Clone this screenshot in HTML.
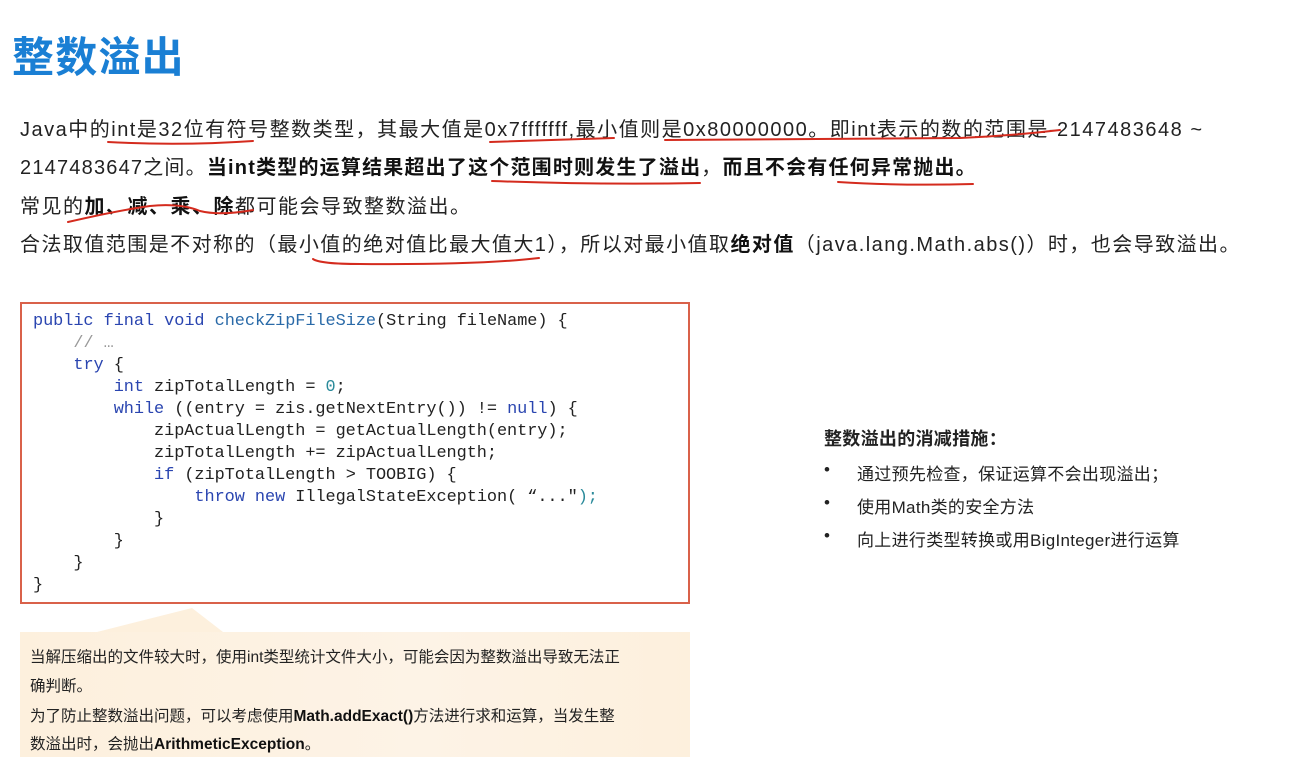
<!DOCTYPE html>
<html><head><meta charset="utf-8"><style>
body{margin:0;width:1294px;height:772px;background:#fff;position:relative;overflow:hidden;font-family:"Liberation Sans","Noto Sans CJK SC",sans-serif;color:#222}
.a{position:absolute;white-space:nowrap}
.t{left:12px;top:24px;font-size:42px;font-weight:bold;color:#1a7fd4;letter-spacing:1.2px}
.p{left:20px;font-size:20px;line-height:24px;letter-spacing:1.5px}
b{font-weight:bold;color:#111}
.code{left:20px;top:302px;width:670px;height:302px;border:2px solid #d9614a;box-sizing:border-box}
pre{margin:0;position:absolute;left:11px;top:7px;font-family:"Liberation Mono",monospace;font-size:16.9px;line-height:22px;color:#222;letter-spacing:-0.05px}
.k{color:#2a45b0}.m{color:#2a6aa8}.c{color:#999}.n{color:#2a8a9a}
.call{left:20px;top:632px;width:670px;height:125px;background:linear-gradient(90deg,#fdf0dd,#fdf3e6 60%,#fdf0dd)}
.call div{position:absolute;left:10px;font-size:15.5px;color:#222;white-space:nowrap}
.r{left:824px;font-size:17px;letter-spacing:0.3px}
.r span{position:absolute;left:33px}
</style></head><body>
<div class="a t">整数溢出</div>
<div class="a p" style="top:118px">Java中的int是32位有符号整数类型，其最大值是0x7fffffff,最小值则是0x80000000。即int表示的数的范围是-2147483648 ~</div>
<div class="a p" style="top:156px;letter-spacing:1.2px">2147483647之间。<b>当int类型的运算结果超出了这个范围时则发生了溢出</b>，<b>而且不会有任何异常抛出。</b></div>
<div class="a p" style="top:195px">常见的<b>加、减、乘、除</b>都可能会导致整数溢出。</div>
<div class="a p" style="top:233px;letter-spacing:1.45px">合法取值范围是不对称的（最小值的绝对值比最大值大1），所以对最小值取<b>绝对值</b>（java.lang.Math.abs()）时，也会导致溢出。</div>
<svg class="a" style="left:0;top:0" width="1294" height="300" fill="none" stroke="#d42b1e" stroke-width="2" stroke-linecap="round">
<path d="M108 142 Q180 146 253 141"/>
<path d="M490 142 Q550 140 614 138"/>
<path d="M665 140 Q800 139 960 138 Q1010 136 1060 130"/>
<path d="M492 181 Q600 185 700 183"/>
<path d="M838 182 Q900 186 973 184"/>
<path d="M68 222 Q120 210 150 206 Q180 203 200 211 Q220 216 253 210"/>
<path d="M313 259 Q320 264 360 264 Q480 265 539 258"/>
</svg>
<div class="a code"><pre><span class="k">public</span> <span class="k">final</span> <span class="k">void</span> <span class="m">checkZipFileSize</span>(String fileName) {
    <span class="c">// …</span>
    <span class="k">try</span> {
        <span class="k">int</span> zipTotalLength = <span class="n">0</span>;
        <span class="k">while</span> ((entry = zis.getNextEntry()) != <span class="k">null</span>) {
            zipActualLength = getActualLength(entry);
            zipTotalLength += zipActualLength;
            <span class="k">if</span> (zipTotalLength &gt; TOOBIG) {
                <span class="k">throw</span> <span class="k">new</span> IllegalStateException( “..."<span class="n">);</span>
            }
        }
    }
}</pre></div>
<svg class="a" style="left:0;top:600px" width="300" height="40"><polygon points="97,32 192,8 223,32" fill="#fdf0dd"/></svg>
<div class="a call">
<div style="top:13px">当解压缩出的文件较大时，使用int类型统计文件大小，可能会因为整数溢出导致无法正</div>
<div style="top:42px">确判断。</div>
<div style="top:72px">为了防止整数溢出问题，可以考虑使用<b>Math.addExact()</b>方法进行求和运算，当发生整</div>
<div style="top:100px">数溢出时，会抛出<b>ArithmeticException</b>。</div>
</div>
<div class="a r" style="top:425px;font-weight:bold;font-size:18px">整数溢出的消减措施：</div>
<div class="a r" style="top:460px">•<span>通过预先检查，保证运算不会出现溢出；</span></div>
<div class="a r" style="top:493px">•<span>使用Math类的安全方法</span></div>
<div class="a r" style="top:526px">•<span>向上进行类型转换或用BigInteger进行运算</span></div>
</body></html>
